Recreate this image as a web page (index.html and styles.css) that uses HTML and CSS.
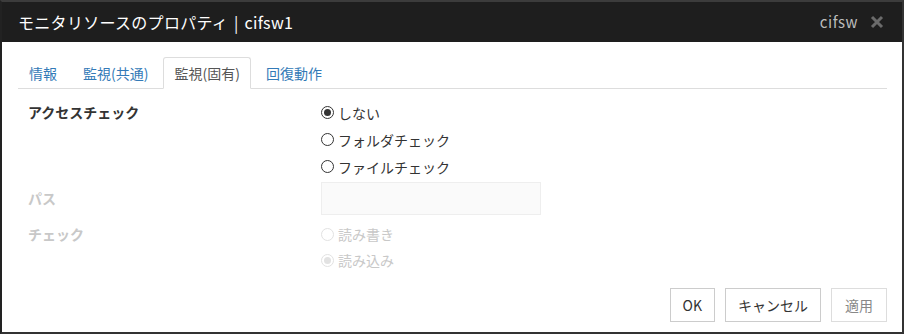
FILE: index.html
```html
<!DOCTYPE html>
<html lang="ja">
<head>
    <meta charset="UTF-8">
    <title>モニタリソースのプロパティ | cifsw1</title>
    <link rel="stylesheet" href="styles.css">
</head>
<body>
    <div class="dialog">
        <div class="dialog-header">
            <h2 class="dialog-title">モニタリソースのプロパティ | cifsw1</h2>
            <div class="header-right">
                <span class="res-type">cifsw</span>
                <svg class="close" width="14" height="14" viewBox="0 0 14 14">
                    <path d="M2 2 L12 12 M12 2 L2 12" stroke="#6b6b6b" stroke-width="3"/>
                </svg>
            </div>
        </div>
        <div class="dialog-body">
            <ul class="tabs">
                <li class="tab">情報</li>
                <li class="tab">監視(共通)</li>
                <li class="tab active">監視(固有)</li>
                <li class="tab">回復動作</li>
            </ul>
            <form class="form">
                <div class="form-row">
                    <div class="form-label strong">アクセスチェック</div>
                    <div class="form-field">
                        <label class="radio-line"><input type="radio" name="access" checked> しない</label>
                        <label class="radio-line"><input type="radio" name="access"> フォルダチェック</label>
                        <label class="radio-line"><input type="radio" name="access"> ファイルチェック</label>
                    </div>
                </div>
                <div class="form-row path-row">
                    <div class="form-label disabled">パス</div>
                    <div class="form-field">
                        <input type="text" class="text-input" disabled>
                    </div>
                </div>
                <div class="form-row check-row">
                    <div class="form-label disabled">チェック</div>
                    <div class="form-field">
                        <label class="radio-line disabled"><input type="radio" name="mode" disabled> 読み書き</label>
                        <label class="radio-line disabled"><input type="radio" name="mode" checked disabled> 読み込み</label>
                    </div>
                </div>
            </form>
            <div class="buttons">
                <button type="button" class="btn">OK</button>
                <button type="button" class="btn">キャンセル</button>
                <button type="button" class="btn" disabled>適用</button>
            </div>
        </div>
    </div>
</body>
</html>
```

FILE: styles.css
```css
body {
    margin: 0;
    background-color: #fff;
    font-family: "Noto Sans CJK JP", "Noto Sans", sans-serif;
    font-size: 14px;
    color: #333;
}
.dialog {
    width: 900px;
    height: 330px;
    border: 2px solid #333;
    border-top-color: #3c3c3c;
    border-left-color: #222;
    display: flex;
    flex-direction: column;
    background-color: #fff;
}
.dialog-header {
    background-color: #1e1e1e;
    height: 40px;
    display: flex;
    align-items: center;
    justify-content: space-between;
    padding: 0 18px 0 16px;
}
.dialog-title {
    margin: 0;
    font-size: 16px;
    font-weight: normal;
    color: #fff;
    line-height: 20px;
    letter-spacing: 0.3px;
    word-spacing: 2px;
}
.header-right {
    display: flex;
    align-items: center;
    gap: 12px;
}
.res-type {
    color: #bbb;
    font-size: 15px;
    line-height: 20px;
    letter-spacing: 0.5px;
}
.close {
    display: block;
}
.dialog-body {
    flex: 1;
    padding: 15px 15px 10px 16px;
    display: flex;
    flex-direction: column;
}
.tabs {
    list-style: none;
    margin: 0;
    padding: 0;
    display: flex;
    border-bottom: 1px solid #ddd;
}
.tab {
    padding: 0 10px;
    margin-right: 4px;
    height: 30px;
    line-height: 30px;
    color: #337ab7;
    border: 1px solid transparent;
    border-bottom: none;
    margin-bottom: -1px;
}
.tab.active {
    color: #555;
    background-color: #fff;
    border-color: #ddd;
    border-bottom: 1px solid #fff;
    border-radius: 3px 3px 0 0;
}
.form {
    padding: 10px 0 0 10px;
}
.form-row {
    display: flex;
}
.form-label {
    width: 293px;
    line-height: 27px;
}
.form-label.strong {
    font-weight: bold;
}
.form-label.disabled {
    color: #c8c8c8;
    font-weight: bold;
}
.form-field {
    display: flex;
    flex-direction: column;
}
.radio-line {
    display: flex;
    align-items: center;
    gap: 4px;
    height: 27px;
}
.radio-line.disabled {
    color: #c8c8c8;
}
.radio-line input {
    appearance: none;
    margin: 0;
    width: 13px;
    height: 13px;
    border: 1px solid #333;
    border-radius: 50%;
    display: grid;
    place-content: center;
    background: #fff;
}
.radio-line input:checked::before {
    content: "";
    width: 7px;
    height: 7px;
    border-radius: 50%;
    background: #333;
}
.radio-line input:disabled {
    border-color: #e2e2e2;
}
.radio-line input:disabled:checked::before {
    background: #e2e2e2;
}
.path-row {
    margin-top: 2px;
}
.path-row .form-label {
    line-height: 33px;
}
.text-input {
    width: 218px;
    height: 31px;
    margin: 0;
    padding: 0;
    border: 1px solid #eee;
    background-color: #fafafa;
}
.check-row {
    margin-top: 6px;
}
.check-row .radio-line {
    height: 26px;
}
.check-row .form-label {
    line-height: 26px;
}
.buttons {
    margin-top: auto;
    display: flex;
    justify-content: flex-end;
    gap: 10px;
}
.btn {
    font-family: inherit;
    font-size: 14px;
    color: #333;
    background-color: #fff;
    border: 1px solid #ccc;
    height: 34px;
    padding: 0 12px;
    min-width: 44px;
}
.btn:disabled {
    color: #888;
    border-color: #ddd;
    padding: 0 13px;
}
```
